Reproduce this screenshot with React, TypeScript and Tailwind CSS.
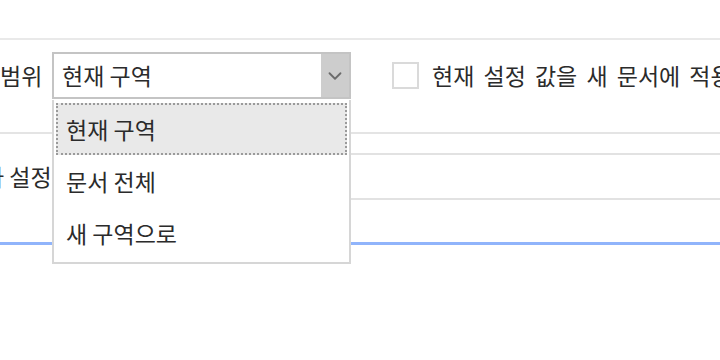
import { ChevronDown } from 'lucide-react'

const ITEMS = ['현재 구역', '문서 전체', '새 구역으로']

export default function App() {
  return (
    <div
      className="relative w-[720px] h-[360px] overflow-hidden bg-white text-[#2b2b2b] text-[23px]"
      style={{ fontFamily: '"Noto Sans CJK KR", "Noto Sans", sans-serif' }}
    >
      <div className="h-[40px] border-b-2 border-[#e9e9e9]" />

      {/* scope row */}
      <div className="h-[94px] flex items-start pt-[12px] border-b-2 border-[#e4e4e4]">
        <div className="w-[52px] shrink-0 h-[47px] flex items-center leading-none">범위</div>
        <div className="w-[299px] shrink-0 h-[47px] flex border-2 border-[#c4c4c4] bg-white">
          <div className="flex-1 flex items-center pl-[8px] leading-none">현재 구역</div>
          <div className="w-[28px] bg-[#cdcdcd] flex items-center justify-center">
            <ChevronDown size={22} strokeWidth={2} className="text-[#6b6b6b]" />
          </div>
        </div>
        <div className="ml-[41px] shrink-0 h-[47px] flex items-center gap-[13px]">
          <div className="w-[27px] h-[27px] shrink-0 border-2 border-[#dadada] bg-white" />
          <span className="whitespace-nowrap leading-none [word-spacing:4px]">현재 설정 값을 새 문서에 적용</span>
        </div>
      </div>

      {/* setting row */}
      <div className="mt-[19px] flex items-center">
        <div className="ml-[-17px] w-[100px] shrink-0 leading-none whitespace-nowrap">가 설정</div>
        <div className="flex-1 h-[47px] border-2 border-r-0 border-[#e2e2e2]" />
      </div>

      <div className="mt-[42px] h-[3px] bg-[#90b4fb]" />

      {/* open dropdown */}
      <div className="absolute left-[52px] top-[100px] w-[299px] h-[164px] bg-white border-2 border-t-0 border-[#d6d6d6] pt-[3px] px-[2px]">
        {ITEMS.map((item, i) => (
          <div
            key={item}
            className={
              i === 0
                ? 'h-[52px] flex items-center pl-[8px] bg-[#e9e9e9] border-2 border-dotted border-[#9a9a9a] leading-none'
                : 'h-[52px] flex items-center pl-[10px] leading-none'
            }
          >
            {item}
          </div>
        ))}
      </div>
    </div>
  )
}
